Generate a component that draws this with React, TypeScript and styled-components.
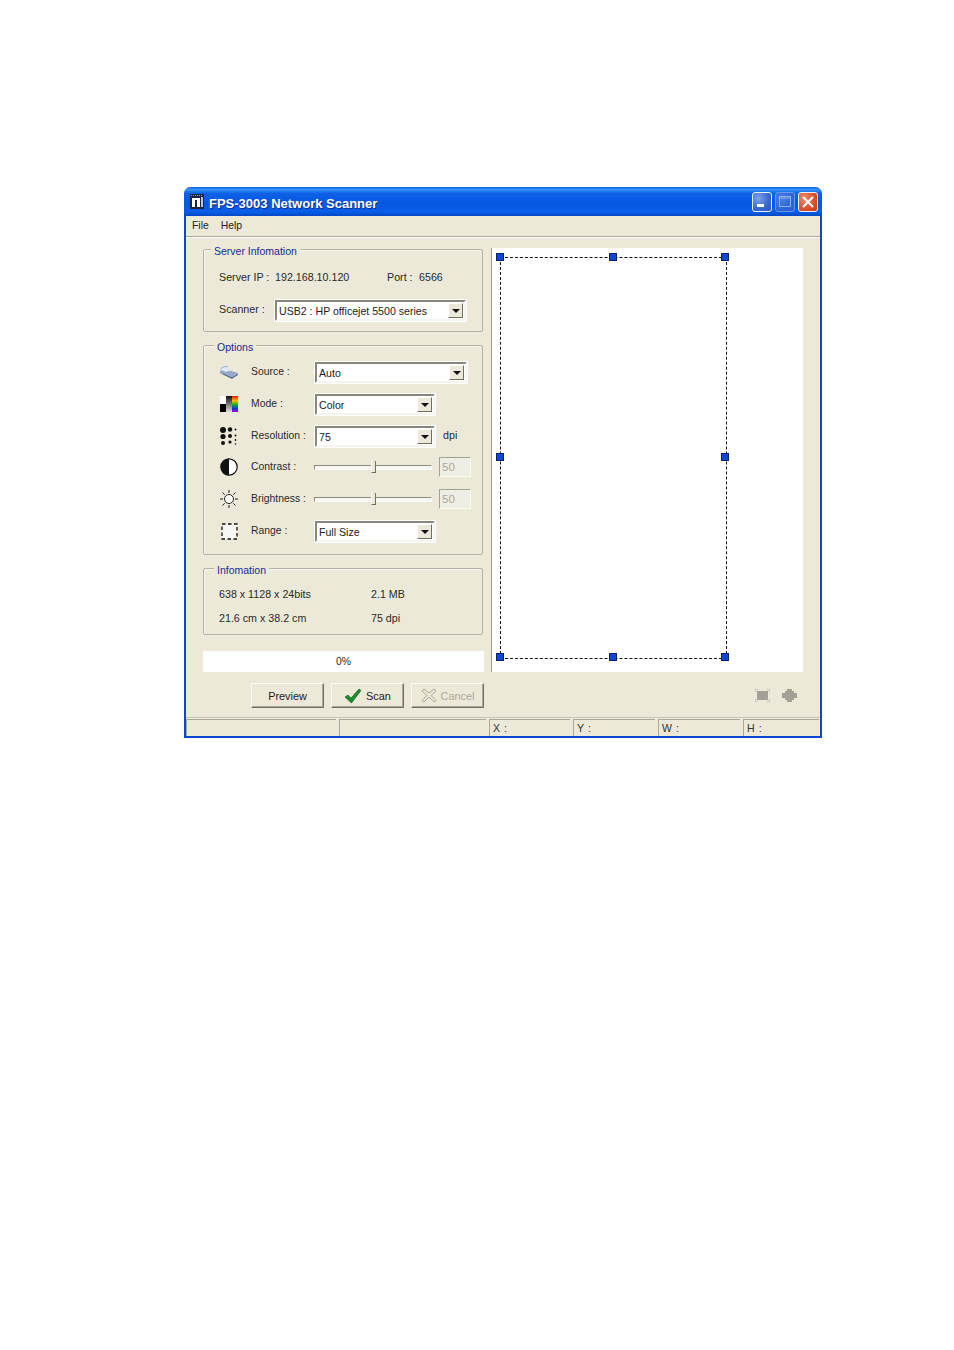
import type { FC } from "react";
import styled, { createGlobalStyle } from "styled-components";

const GlobalStyle = createGlobalStyle`
    html, body {
        margin: 0;
        padding: 0;
        background: #fff;
    }
    body {
        font-family: "Liberation Sans", Arial, sans-serif;
        font-size: 10.7px;
        color: #2a2a2a;
    }
`;

const Page = styled.div`
    width: 954px;
    height: 1350px;
    padding: 187px 0 0 184px;
    box-sizing: border-box;
`;

const Window = styled.div`
    width: 638px;
    height: 551px;
    box-sizing: border-box;
    display: flex;
    flex-direction: column;
    background: #ece9d8;
    border: solid #0a48d0;
    border-width: 0 2px 2px 2px;
    border-radius: 7px 7px 0 0;
`;

const TitleBar = styled.div`
    height: 29px;
    margin: 0 -2px;
    padding: 0 4px 0 6px;
    flex: none;
    display: flex;
    align-items: center;
    gap: 5px;
    border-radius: 7px 7px 0 0;
    background: linear-gradient(180deg, #0a5bd8 0%, #3a93ff 8%, #0f62e6 22%, #0556e0 60%, #0a5fea 85%, #0347c4 100%);
`;

const TitleText = styled.div`
    flex: 1;
    font-size: 13px;
    font-weight: 700;
    color: #fff;
    text-shadow: 1px 1px 0 #0a2f8c;
    margin-top: 4px;
`;

const CaptionButton = styled.div<{ $kind: "min" | "max" | "close" }>`
    width: 20px;
    height: 20px;
    box-sizing: border-box;
    display: flex;
    align-items: center;
    justify-content: center;
    border-radius: 3px;
    border: 1px solid ${(p) => (p.$kind === "max" ? "#6d94e6" : "#e8eefc")};
    background: ${(p) =>
        p.$kind === "close"
            ? "radial-gradient(circle at 30% 30%, #ef8a6c, #d9502c 60%, #c23a18)"
            : p.$kind === "min"
              ? "radial-gradient(circle at 30% 30%, #7ea2ec, #3766cf 60%, #2a52c0)"
              : "radial-gradient(circle at 30% 30%, #4a7fe6, #2a62d8 70%)"};
`;

const CaptionButtons = styled.div`
    display: flex;
    gap: 3px;
`;

const MenuBar = styled.div`
    height: 18px;
    padding: 0 0 2px 6px;
    flex: none;
    display: flex;
    align-items: center;
    gap: 12px;
    border-bottom: 1px solid #aca899;
    box-shadow: 0 1px 0 #fff;
    font-size: 10.4px;
    color: #222;
`;

const Main = styled.div`
    flex: 1;
    display: flex;
    gap: 7px;
    padding: 11px 0 0 17px;
    min-height: 0;
`;

const LeftColumn = styled.div`
    width: 281px;
    padding-top: 1px;
    display: flex;
    flex-direction: column;
`;

const Group = styled.section<{ $height: number; $gap: number }>`
    position: relative;
    height: ${(p) => p.$height}px;
    width: 280px;
    box-sizing: border-box;
    margin-bottom: ${(p) => p.$gap}px;
    border: 1px solid #b5b2a4;
    box-shadow: inset 1px 1px 0 #f6f5ee;
    border-radius: 2px;
`;

const Legend = styled.div<{ $left: number }>`
    position: absolute;
    top: -5px;
    left: ${(p) => p.$left}px;
    padding: 0 3px 0 3px;
    background: linear-gradient(180deg, transparent 0, transparent 3px, #ece9d8 3px);
    color: #1b2a92;
    font-size: 10.5px;
    line-height: 13px;
`;

const ServerBody = styled.div`
    padding: 20px 0 0 15px;
    display: flex;
    flex-direction: column;
    gap: 19px;
`;

const ServerRow = styled.div`
    display: flex;
    align-items: center;
    height: 14px;
`;

const Cell = styled.span<{ $width?: number }>`
    display: inline-block;
    white-space: nowrap;
    ${(p) => (p.$width ? `width: ${p.$width}px;` : "")}
`;

const ScannerLabel = styled(Cell)`
    margin-top: -4px;
`;

const ScannerRow = styled.div`
    display: flex;
    align-items: center;
    margin-top: -3px;
`;

const OptionsBody = styled.div`
    padding-top: 10px;
    display: grid;
    grid-template-rows: 32px 32px 31px 32px 32px 32px;
`;

const OptionRow = styled.div`
    display: grid;
    grid-template-columns: 15px 20px 12px 64px auto;
    align-items: center;
    height: 32px;
`;

const IconSlot = styled.div`
    grid-column: 2;
    display: flex;
    align-items: center;
    justify-content: center;
`;

const RowLabel = styled.span`
    grid-column: 4;
    margin-top: -1px;
    white-space: nowrap;
    font-size: 10.4px;
`;

const Controls = styled.div`
    grid-column: 5;
    display: flex;
    align-items: center;
`;

const Combo = styled.div<{ $width: number }>`
    width: ${(p) => p.$width}px;
    height: 21px;
    box-sizing: border-box;
    display: flex;
    align-items: center;
    background: #fff;
    border: 2px solid;
    border-color: #8a877a #f6f5ee #f6f5ee #8a877a;
    outline: 1px solid #fff;
    padding: 1px 1px 1px 2px;
    font-size: 10.6px;
    color: #222;
`;

const ComboText = styled.span`
    flex: 1;
    white-space: nowrap;
    overflow: hidden;
    margin-top: 1px;
`;

const ComboArrow = styled.div`
    width: 15px;
    height: 15px;
    flex: none;
    box-sizing: border-box;
    display: flex;
    align-items: center;
    justify-content: center;
    background: #ece9d8;
    border: 1px solid;
    border-color: #fff #716f64 #716f64 #fff;
    &::after {
        content: "";
        border: solid transparent;
        border-width: 4px 4px 0 4px;
        border-top-color: #111;
        margin-top: 1px;
    }
`;

const Suffix = styled.span`
    margin-left: 8px;
    margin-top: -2px;
`;

const Slider = styled.div`
    position: relative;
    width: 118px;
    height: 5px;
    margin-left: -1px;
    box-sizing: border-box;
    background: #f7f6f0;
    border: 1px solid;
    border-color: #8f8c7e #fff #fff #8f8c7e;
`;

const Thumb = styled.div<{ $left: number }>`
    position: absolute;
    left: ${(p) => p.$left}px;
    top: -5px;
    width: 5px;
    height: 12px;
    box-sizing: border-box;
    background: #ece9d8;
    border-right: 1px solid #716f64;
    border-bottom: 1px solid #716f64;
    border-left: 1px solid #fff;
`;

const ValueBox = styled.div`
    width: 32px;
    height: 20px;
    margin-left: 7px;
    box-sizing: border-box;
    padding: 0 0 0 2px;
    display: flex;
    align-items: center;
    border: 1px solid;
    border-color: #a5a294 #fbfaf5 #fbfaf5 #a5a294;
    background: #efeee4;
    color: #a9a79b;
    font-size: 11.5px;
`;

const InfoBody = styled.div`
    padding: 18px 0 0 15px;
    display: grid;
    grid-template-columns: 152px auto;
    grid-auto-rows: 14px;
    row-gap: 10px;
    align-items: center;
`;

const Progress = styled.div`
    width: 281px;
    height: 21px;
    display: flex;
    align-items: center;
    justify-content: center;
    background: #fff;
    font-size: 10.4px;
    margin: 3px 0 11px;
`;

const ButtonRow = styled.div`
    display: flex;
    justify-content: flex-end;
    gap: 7px;
`;

const PushButton = styled.div<{ $disabled?: boolean }>`
    width: 73px;
    height: 25px;
    box-sizing: border-box;
    display: flex;
    align-items: center;
    justify-content: center;
    gap: 4px;
    background: #ece9d8;
    border: 1px solid;
    border-color: #fbfaf5 #716f64 #716f64 #fbfaf5;
    box-shadow: inset -1px -1px 0 #aca899;
    color: ${(p) => (p.$disabled ? "#aca899" : "#222")};
    font-size: 10.9px;
`;

const RightColumn = styled.div`
    width: 312px;
    display: flex;
    flex-direction: column;
`;

const PreviewPanel = styled.div`
    position: relative;
    width: 312px;
    height: 424px;
    box-sizing: border-box;
    background: #fff;
    border-left: 1px solid #9c9a8c;
`;

const CropBox = styled.div`
    position: absolute;
    left: 8px;
    top: 9px;
    width: 227px;
    height: 402px;
    box-sizing: border-box;
    border: 1px dashed #111;
`;

const Handle = styled.div<{ $x: number; $y: number }>`
    position: absolute;
    left: ${(p) => p.$x}%;
    top: ${(p) => p.$y}%;
    width: 8px;
    height: 8px;
    margin: -5px 0 0 -5px;
    background: #0d47d8;
    border: 1px solid #0a1f6a;
    box-sizing: border-box;
`;

const ToolIcons = styled.div`
    display: flex;
    justify-content: flex-end;
    align-items: center;
    gap: 12px;
    padding: 17px 6px 0 0;
`;

const StatusBar = styled.div`
    height: 19px;
    flex: none;
    display: flex;
    gap: 3px;
    padding: 1px 1px 0 0;
    box-sizing: border-box;
    border-top: 1px solid #c9c6b6;
`;

const StatusPane = styled.div<{ $width: number }>`
    width: ${(p) => p.$width}px;
    box-sizing: border-box;
    padding: 2px 0 0 3px;
    border-top: 1px solid #aca899;
    border-left: 1px solid #aca899;
    font-size: 10.5px;
    letter-spacing: 0.6px;
    color: #333;
`;

const AppLogo: FC = () => (
    <svg width="14" height="15" viewBox="0 0 14 15">
        <rect width="14" height="15" fill="#1c2440" />
        <path d="M2 4h8v9H7V6H5v7H2z" fill="#fff" />
        <rect x="11" y="3" width="2" height="10" fill="#b9c6e8" />
        <path d="M1 1.500h12" stroke="#8c9ac8" strokeDasharray="1 1" />
    </svg>
);

const ScannerIcon: FC = () => (
    <svg width="20" height="15" viewBox="0 0 20 15">
        <path d="M1 8 7 6l12 3-6 5z" fill="#6f80a0" />
        <path d="M1 6l5-2 13 4v1.500L13 13 1 8z" fill="#98a9c8" />
        <path d="M1 4.500C3 2 6 1 9 1.500L12 5 7 7z" fill="#dfe8f5" />
        <path d="M1 4.500C3 2 6 1 9 1.500" fill="none" stroke="#9fb0cc" />
        <path d="M4 9l9 4 6-3.500" fill="none" stroke="#566684" />
    </svg>
);

const ModeIcon: FC = () => (
    <svg width="18" height="16" viewBox="0 0 18 16">
        <defs>
            <linearGradient id="grayRamp" x1="0" y1="0" x2="0" y2="1">
                <stop offset="0" stopColor="#111" />
                <stop offset="1" stopColor="#ddd" />
            </linearGradient>
            <linearGradient id="hueRamp" x1="0" y1="0" x2="0" y2="1">
                <stop offset="0" stopColor="#f01010" />
                <stop offset="0.3" stopColor="#f8c000" />
                <stop offset="0.55" stopColor="#10b020" />
                <stop offset="0.8" stopColor="#1030e0" />
                <stop offset="1" stopColor="#b010c0" />
            </linearGradient>
        </defs>
        <rect x="0" y="8" width="6" height="8" fill="#000" />
        <rect x="0" y="0" width="6" height="8" fill="#fff" />
        <rect x="6" y="0" width="6" height="16" fill="url(#grayRamp)" />
        <rect x="12" y="0" width="6" height="16" fill="url(#hueRamp)" />
    </svg>
);

const DotsIcon: FC = () => (
    <svg width="18" height="19" viewBox="0 0 18 19" fill="#111">
        <circle cx="3" cy="3" r="3" />
        <circle cx="10" cy="2.500" r="2.200" />
        <circle cx="15.500" cy="2.500" r="1" />
        <circle cx="3" cy="9.500" r="2.600" />
        <circle cx="10" cy="9" r="2" />
        <circle cx="15.500" cy="8.500" r="1" />
        <circle cx="3" cy="16" r="2" />
        <circle cx="10" cy="15" r="1.600" />
        <circle cx="15.500" cy="13" r="0.900" />
        <circle cx="15.500" cy="17" r="0.800" />
    </svg>
);

const ContrastIcon: FC = () => (
    <svg width="18" height="18" viewBox="0 0 18 18">
        <circle cx="9" cy="9" r="8.200" fill="#fff" stroke="#111" strokeWidth="1.200" />
        <path d="M9 .8a8.200 8.200 0 0 0 0 16.400z" fill="#111" />
    </svg>
);

const SunIcon: FC = () => (
    <svg width="20" height="20" viewBox="0 0 20 20" fill="none" stroke="#222">
        <circle cx="10" cy="10" r="4.500" fill="#fff" />
        <path d="M10 1v3M10 16v3M1 10h3M16 10h3M3.500 3.500l2.200 2.200M14.300 14.300l2.200 2.200M3.500 16.500l2.200-2.200M14.300 5.700l2.200-2.200" />
    </svg>
);

const RangeIcon: FC = () => (
    <svg width="17" height="17" viewBox="0 0 17 17">
        <rect x="1" y="1" width="15" height="15" fill="#f7f7f4" stroke="#111" strokeWidth="1.300" strokeDasharray="3.500 2.500" />
    </svg>
);

const CheckIcon: FC = () => (
    <svg width="18" height="16" viewBox="0 0 18 16">
        <path d="M1 9l3-2 3 3 8-9 2 1.500L7.500 15z" fill="#1c8c2c" stroke="#0c5a18" strokeWidth="0.600" />
    </svg>
);

const CancelIcon: FC = () => (
    <svg width="16" height="15" viewBox="0 0 16 15" fill="#ece9d8" stroke="#aca899">
        <path d="M1 3l2-2 5 4 5-4 2 2-5 4.500 5 5-2 1.500-5-5-5 5-2-1.500 5-5z" />
    </svg>
);

const FitIcon: FC = () => (
    <svg width="15" height="13" viewBox="0 0 15 13">
        <rect x="2" y="2" width="11" height="9" fill="#a3a196" />
        <path d="M.5 3V.5H3M12 .5h2.500V3M14.500 10v2.500H12M3 12.500H.5V10" fill="none" stroke="#c4c2b6" />
    </svg>
);

const ZoomIcon: FC = () => (
    <svg width="15" height="13" viewBox="0 0 15 13" fill="#a3a196">
        <rect x="3" y="2" width="9" height="9" />
        <rect x="5" y="0" width="5" height="13" />
        <rect x="0" y="4" width="15" height="5" />
    </svg>
);

const handles = [
    { x: 0, y: 0 },
    { x: 50, y: 0 },
    { x: 100, y: 0 },
    { x: 0, y: 50 },
    { x: 100, y: 50 },
    { x: 0, y: 100 },
    { x: 50, y: 100 },
    { x: 100, y: 100 },
];

const ComboBox: FC<{ value: string; width: number }> = ({ value, width }) => (
    <Combo $width={width}>
        <ComboText>{value}</ComboText>
        <ComboArrow />
    </Combo>
);

const SliderRow: FC = () => (
    <>
        <Slider>
            <Thumb $left={56} />
        </Slider>
        <ValueBox>50</ValueBox>
    </>
);

const App: FC = () => (
    <Page>
        <GlobalStyle />
        <Window>
            <TitleBar>
                <AppLogo />
                <TitleText>FPS-3003 Network Scanner</TitleText>
                <CaptionButtons>
                    <CaptionButton $kind="min">
                        <svg width="14" height="14" viewBox="0 0 14 14">
                            <rect x="2" y="9" width="7" height="3" fill="#fff" />
                        </svg>
                    </CaptionButton>
                    <CaptionButton $kind="max">
                        <svg width="14" height="14" viewBox="0 0 14 14" fill="none" stroke="#8fb0ee">
                            <rect x="1.500" y="1.500" width="11" height="10" />
                            <path d="M1.500 3h11" />
                        </svg>
                    </CaptionButton>
                    <CaptionButton $kind="close">
                        <svg width="14" height="14" viewBox="0 0 14 14" stroke="#fff" strokeWidth="2">
                            <path d="M2 2l10 10M12 2 2 12" />
                        </svg>
                    </CaptionButton>
                </CaptionButtons>
            </TitleBar>
            <MenuBar>
                <span>File</span>
                <span>Help</span>
            </MenuBar>
            <Main>
                <LeftColumn>
                    <Group $height={83} $gap={13}>
                        <Legend $left={7}>Server Infomation</Legend>
                        <ServerBody>
                            <ServerRow>
                                <Cell $width={56}>Server IP :</Cell>
                                <Cell $width={112}>192.168.10.120</Cell>
                                <Cell $width={32}>Port :</Cell>
                                <Cell>6566</Cell>
                            </ServerRow>
                            <ScannerRow>
                                <ScannerLabel $width={56}>Scanner :</ScannerLabel>
                                <ComboBox value="USB2 : HP officejet 5500 series" width={191} />
                            </ScannerRow>
                        </ServerBody>
                    </Group>
                    <Group $height={210} $gap={13}>
                        <Legend $left={10}>Options</Legend>
                        <OptionsBody>
                            <OptionRow>
                                <IconSlot><ScannerIcon /></IconSlot>
                                <RowLabel>Source :</RowLabel>
                                <Controls><ComboBox value="Auto" width={152} /></Controls>
                            </OptionRow>
                            <OptionRow>
                                <IconSlot><ModeIcon /></IconSlot>
                                <RowLabel>Mode :</RowLabel>
                                <Controls><ComboBox value="Color" width={120} /></Controls>
                            </OptionRow>
                            <OptionRow>
                                <IconSlot><DotsIcon /></IconSlot>
                                <RowLabel>Resolution :</RowLabel>
                                <Controls>
                                    <ComboBox value="75" width={120} />
                                    <Suffix>dpi</Suffix>
                                </Controls>
                            </OptionRow>
                            <OptionRow>
                                <IconSlot><ContrastIcon /></IconSlot>
                                <RowLabel>Contrast :</RowLabel>
                                <Controls><SliderRow /></Controls>
                            </OptionRow>
                            <OptionRow>
                                <IconSlot><SunIcon /></IconSlot>
                                <RowLabel>Brightness :</RowLabel>
                                <Controls><SliderRow /></Controls>
                            </OptionRow>
                            <OptionRow>
                                <IconSlot><RangeIcon /></IconSlot>
                                <RowLabel>Range :</RowLabel>
                                <Controls><ComboBox value="Full Size" width={120} /></Controls>
                            </OptionRow>
                        </OptionsBody>
                    </Group>
                    <Group $height={67} $gap={13}>
                        <Legend $left={10}>Infomation</Legend>
                        <InfoBody>
                            <Cell>638 x 1128 x 24bits</Cell>
                            <Cell>2.1 MB</Cell>
                            <Cell>21.6 cm x 38.2 cm</Cell>
                            <Cell>75 dpi</Cell>
                        </InfoBody>
                    </Group>
                    <Progress>0%</Progress>
                    <ButtonRow>
                        <PushButton>Preview</PushButton>
                        <PushButton>
                            <CheckIcon />
                            Scan
                        </PushButton>
                        <PushButton $disabled>
                            <CancelIcon />
                            Cancel
                        </PushButton>
                    </ButtonRow>
                </LeftColumn>
                <RightColumn>
                    <PreviewPanel>
                        <CropBox>
                            {handles.map((h) => (
                                <Handle key={`${h.x}-${h.y}`} $x={h.x} $y={h.y} />
                            ))}
                        </CropBox>
                    </PreviewPanel>
                    <ToolIcons>
                        <FitIcon />
                        <ZoomIcon />
                    </ToolIcons>
                </RightColumn>
            </Main>
            <StatusBar>
                <StatusPane $width={150} />
                <StatusPane $width={147} />
                <StatusPane $width={81}>X :</StatusPane>
                <StatusPane $width={82}>Y :</StatusPane>
                <StatusPane $width={82}>W :</StatusPane>
                <StatusPane $width={76}>H :</StatusPane>
            </StatusBar>
        </Window>
    </Page>
);

export default App;
